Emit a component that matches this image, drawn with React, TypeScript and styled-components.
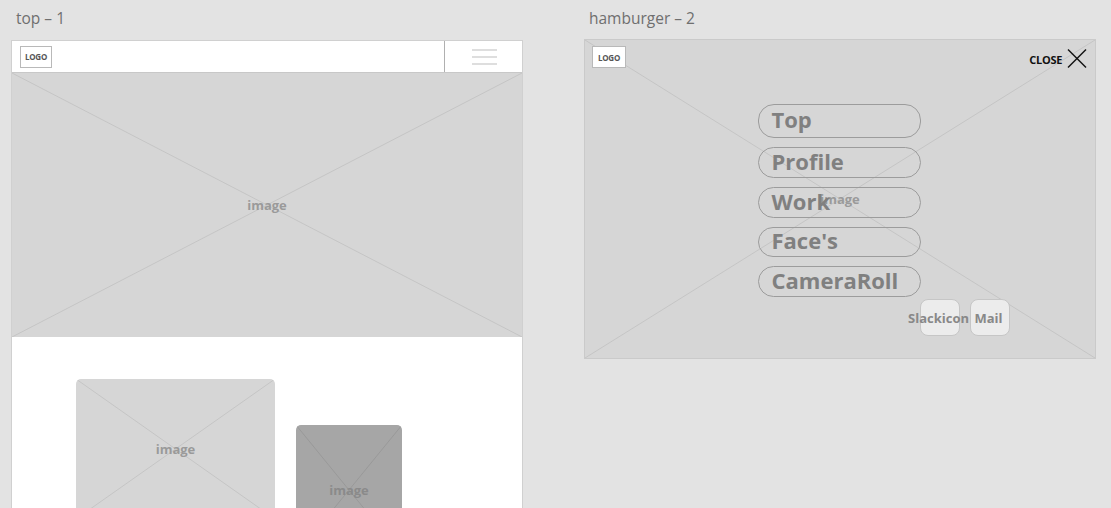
import React from "react";
import styled, { createGlobalStyle } from "styled-components";

const Global = createGlobalStyle`
  html, body { margin: 0; padding: 0; background: #e3e3e3; overflow: hidden; }
  body { font-family: "Open Sans", "Noto Sans", sans-serif; }
  * { box-sizing: border-box; }
`;

const Page = styled.div`
  display: flex;
  align-items: flex-start;
  padding-left: 11px;
  gap: 61px;
  height: 508px;
  overflow: hidden;
`;

const Column = styled.div<{ $labelH: number }>`
  display: flex;
  flex-direction: column;
  width: 512px;
  & > h2 { height: ${(p) => p.$labelH}px; }
`;

const Label = styled.h2`
  margin: 0;
  padding: 7px 0 0 5px;
  font-size: 15.5px;
  font-weight: 400;
  line-height: 22px;
  color: #6f6f6f;
`;

const Artboard = styled.div`
  border: 1px solid #d0d0d0;
  background: #ffffff;
  display: flex;
  flex-direction: column;
  height: 520px;
`;

const Header = styled.header`
  height: 32px;
  display: flex;
  align-items: center;
  justify-content: space-between;
  border-bottom: 1px solid #c8c8c8;
  padding-left: 8px;
  background: #fff;
`;

const LogoBox = styled.div<{ $w: number }>`
  width: ${(p) => p.$w}px;
  height: 22px;
  border: 1px solid #b9b9b9;
  background: #fff;
  display: flex;
  align-items: center;
  justify-content: center;
  font-size: 8px;
  font-weight: 700;
  color: #555;
  letter-spacing: -0.2px;
`;

const BurgerCell = styled.div`
  width: 78px;
  height: 31px;
  border-left: 1px solid #b0b0b0;
  display: flex;
  flex-direction: column;
  align-items: center;
  justify-content: center;
  gap: 5px;
  padding-left: 1px;
`;

const BurgerLine = styled.span`
  display: block;
  width: 25px;
  height: 2px;
  background: #dedede;
`;

const Placeholder = styled.div<{ $h: number; $w?: number; $bg: string; $radius?: number }>`
  position: relative;
  flex-shrink: 0;
  height: ${(p) => p.$h}px;
  width: ${(p) => (p.$w ? `${p.$w}px` : "100%")};
  background: ${(p) => p.$bg};
  border-radius: ${(p) => p.$radius ?? 0}px;
  overflow: hidden;
  display: flex;
  align-items: center;
  justify-content: center;
`;

const Cross = styled.svg`
  position: absolute;
  inset: 0;
  width: 100%;
  height: 100%;
`;

const ImageText = styled.span<{ $color?: string }>`
  position: relative;
  font-size: 13px;
  font-weight: 700;
  color: ${(p) => p.$color ?? "#9a9a9a"};
`;

const CardRow = styled.div`
  display: flex;
  align-items: flex-start;
  gap: 21px;
  padding: 42px 0 0 64px;
`;

const CardSlot = styled.div<{ $top: number }>`
  margin-top: ${(p) => p.$top}px;
`;

const XLines = ({ color }: { color: string }) => (
  <Cross viewBox="0 0 100 100" preserveAspectRatio="none">
    <line x1="0" y1="0" x2="100" y2="100" stroke={color} strokeWidth="1" vectorEffect="non-scaling-stroke" />
    <line x1="100" y1="0" x2="0" y2="100" stroke={color} strokeWidth="1" vectorEffect="non-scaling-stroke" />
  </Cross>
);

/* hamburger artboard */
const Artboard2 = styled.div`
  position: relative;
  width: 512px;
  height: 320px;
  border: 1px solid #cacaca;
  background: #d6d6d6;
  display: flex;
  flex-direction: column;
`;

const CenterLabel = styled.div`
  position: absolute;
  inset: 0;
  display: flex;
  align-items: center;
  justify-content: center;
`;

const TopBar = styled.div`
  position: relative;
  display: flex;
  justify-content: space-between;
  align-items: flex-start;
  padding: 6px 8px 0 7px;
`;

const Close = styled.div`
  display: flex;
  align-items: center;
  gap: 5px;
  padding-top: 3px;
  font-size: 11px;
  font-weight: 700;
  color: #111;
  letter-spacing: -0.3px;
`;

const CloseText = styled.span`
  padding-top: 1px;
`;

const Menu = styled.nav`
  position: relative;
  display: flex;
  flex-direction: column;
  align-items: center;
  gap: 9px;
  margin-top: 36px;
  padding-right: 2px;
`;

const Pill = styled.div<{ $h: number }>`
  width: 163px;
  height: ${(p) => p.$h}px;
  border: 1px solid #9c9c9c;
  border-radius: 16px;
  padding: 0 0 4px 13px;
  display: flex;
  align-items: center;
  font-size: 22px;
  font-weight: 700;
  color: #808080;
  line-height: 1;
  white-space: nowrap;
`;

const IconRow = styled.div`
  position: relative;
  display: flex;
  justify-content: flex-end;
  gap: 10px;
  padding-right: 85px;
  margin-top: 2px;
`;

const IconBtn = styled.div<{ $w: number }>`
  width: ${(p) => p.$w}px;
  height: 37px;
  border: 1px solid #c6c6c6;
  border-radius: 8px;
  background: #ececec;
  display: flex;
  align-items: center;
  justify-content: center;
  font-size: 13px;
  font-weight: 700;
  color: #888;
  white-space: nowrap;
  padding-right: 3px;
`;

const menu: { label: string; h: number }[] = [
  { label: "Top", h: 34 },
  { label: "Profile", h: 31 },
  { label: "Work", h: 31 },
  { label: "Face's", h: 30 },
  { label: "CameraRoll", h: 31 },
];

export default function App() {
  return (
    <>
      <Global />
      <Page>
        <Column $labelH={40}>
          <Label>top – 1</Label>
          <Artboard>
            <Header>
              <LogoBox $w={32}>LOGO</LogoBox>
              <BurgerCell>
                <BurgerLine />
                <BurgerLine />
                <BurgerLine />
              </BurgerCell>
            </Header>
            <Placeholder $h={264} $bg="#d6d6d6">
              <XLines color="#c5c5c5" />
              <ImageText>image</ImageText>
            </Placeholder>
            <CardRow>
              <CardSlot $top={0}>
                <Placeholder $h={140} $w={199} $bg="#d6d6d6" $radius={5}>
                  <XLines color="#c5c5c5" />
                  <ImageText>image</ImageText>
                </Placeholder>
              </CardSlot>
              <CardSlot $top={46}>
                <Placeholder $h={130} $w={106} $bg="#a6a6a6" $radius={5}>
                  <XLines color="#999999" />
                  <ImageText $color="#8a8a8a">image</ImageText>
                </Placeholder>
              </CardSlot>
            </CardRow>
          </Artboard>
        </Column>
        <Column $labelH={39}>
          <Label>hamburger – 2</Label>
          <Artboard2>
            <XLines color="#c5c5c5" />
            <CenterLabel>
              <ImageText>image</ImageText>
            </CenterLabel>
            <TopBar>
              <LogoBox $w={34}>LOGO</LogoBox>
              <Close>
                <CloseText>CLOSE</CloseText>
                <svg width="20" height="19" viewBox="0 0 20 19">
                  <line x1="1" y1="0.5" x2="19" y2="18.5" stroke="#111" strokeWidth="1.4" />
                  <line x1="19" y1="0.5" x2="1" y2="18.5" stroke="#111" strokeWidth="1.4" />
                </svg>
              </Close>
            </TopBar>
            <Menu>
              {menu.map((m) => (
                <Pill key={m.label} $h={m.h}>
                  {m.label}
                </Pill>
              ))}
            </Menu>
            <IconRow>
              <IconBtn $w={40}>Slackicon</IconBtn>
              <IconBtn $w={40}>Mail</IconBtn>
            </IconRow>
          </Artboard2>
        </Column>
      </Page>
    </>
  );
}
